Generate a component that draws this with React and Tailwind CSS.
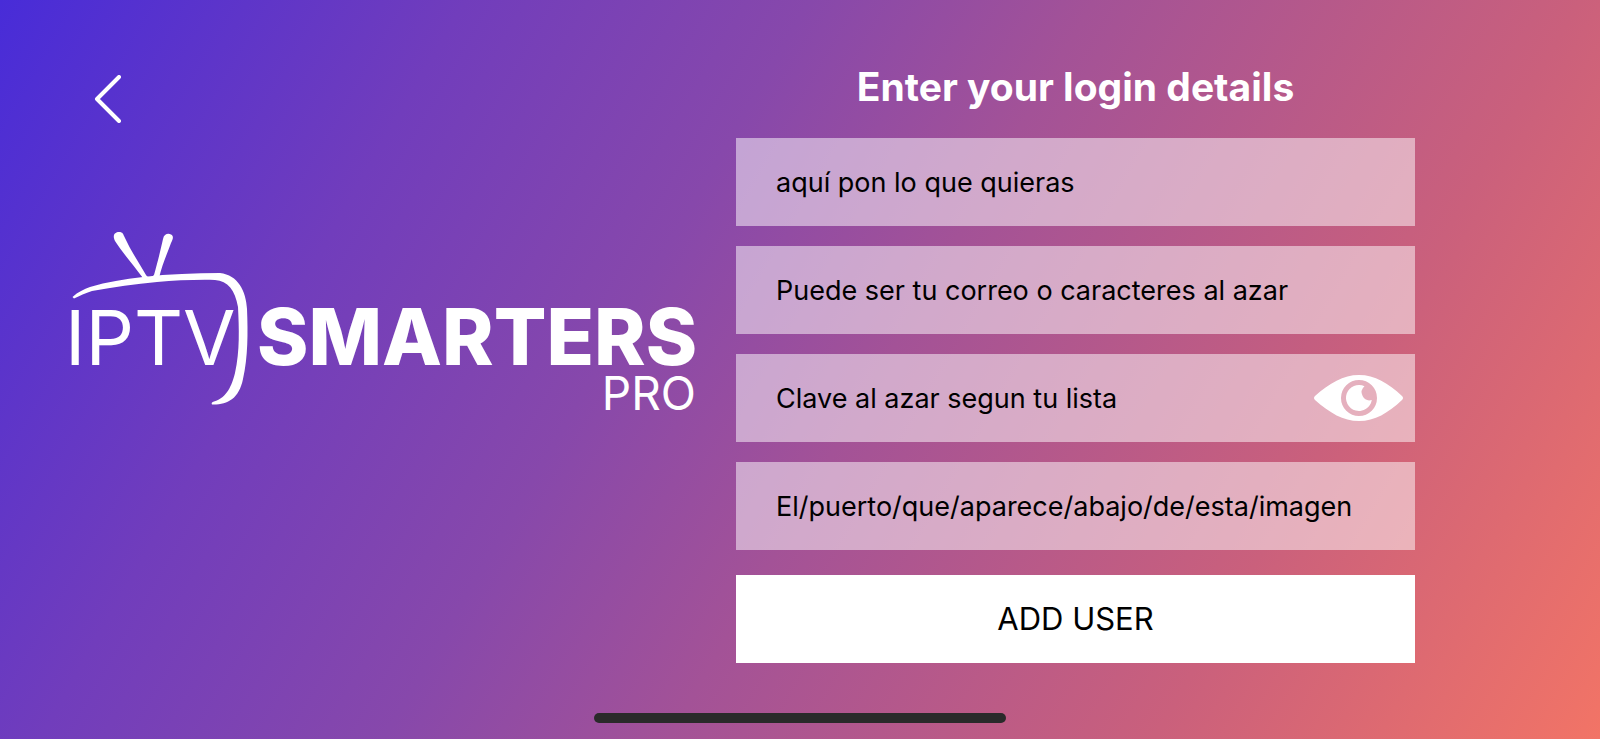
import React, { useState } from "react";

const fields = [
  { id: "name", label: "Any name", value: "aquí pon lo que quieras" },
  { id: "username", label: "Username", value: "Puede ser tu correo o caracteres al azar" },
  { id: "password", label: "Password", value: "Clave al azar segun tu lista" },
  { id: "url", label: "Server URL", value: "El/puerto/que/aparece/abajo/de/esta/imagen" },
];

const Logo = () => (
  <svg viewBox="0 0 630 184" className="w-full overflow-visible fill-white font-['Inter',sans-serif]" role="img" aria-label="IPTV Smarters Pro">
    {/* antennas */}
    <path d="M73 48 C64 36 52 22 45 11 C42 5 45 2 49 2 C53 2 53 4 55 8 C61 21 69 33 76 45 C78 48 81 48 84 45 C88 31 91 18 93 9 C94 4 98 3 101 4.500 C104 6 103 9 101 13 C97 24 92 35 89 48 Z" />
    {/* tv frame */}
    <path d="M2.500 67 C8 62 14 59 20 57 C37 52 54 49 73 47 C99 44 125 43 150 43 C168 45 176 61 177 79 C178 103 178 127 173 149 C169 169 157 175 142 174.500 C141 173 142 172 144 171.500 C157 168 162 155 165 143 C170 121 169 98 168 77 C165 60 158 51 145 50 C126 49.500 106 50.500 87 52 C65 54 44 57 22 61 C15 63 10 66 4 68.500 Z" />
    <text x="-5" y="135" fontSize="76" fontWeight="400">IPTV</text>
    <text x="187" y="135" fontSize="78" fontWeight="800">SMARTERS</text>
    <text x="626" y="180" fontSize="46" fontWeight="400" textAnchor="end">PRO</text>
  </svg>
);

const EyeIcon = () => (
  <svg viewBox="0 0 90 48" className="w-[90px] h-12">
    <path fill="white" fillRule="evenodd" d="M1 22 C16 9 29 1 45 1 C61 1 74 9 88 22 Q90 24 88 26 C74 39 61 47 45 47 C29 47 16 39 1 26 Q-1 24 1 22 Z M45 6 A18 18 0 1 0 45 42 A18 18 0 1 0 45 6 Z" />
    <path fill="white" d="M50.500 12.200 A13 13 0 1 0 57.800 26 A8 8 0 0 1 50.500 12.200 Z" />
  </svg>
);

const App = () => {
  const [values, setValues] = useState(fields.map((f) => f.value));
  const [showPassword, setShowPassword] = useState(true);

  const handleChange = (index, value) => {
    setValues(values.map((v, i) => (i === index ? value : v)));
  };

  return (
    <div className="min-h-screen flex flex-col font-['Inter',sans-serif] bg-[linear-gradient(120deg,#482cd8_0%,#713dbc_23%,#8748ab_40%,#a35297_54%,#ca607c_78%,#f27466_100%)]">
      <main className="flex-1 flex">
        <section className="w-[46%] pt-[75px] pl-[70px] pr-9">
          <button type="button" aria-label="Back" className="block ml-6">
            <svg viewBox="0 0 28 48" className="w-7 h-12" fill="none" stroke="white" strokeWidth="4" strokeLinecap="round" strokeLinejoin="round">
              <path d="M25 2 L3 24 L25 46" />
            </svg>
          </button>
          <div className="mt-[107px]">
            <Logo />
          </div>
        </section>

        <form className="flex-1 mr-[185px] pt-15 flex flex-col" onSubmit={(e) => e.preventDefault()}>
          <h1 className="text-center text-white text-[39px] leading-[54px] font-bold">Enter your login details</h1>
          <div className="mt-6 flex flex-col gap-5">
            {fields.map((field, index) => (
              <div key={field.id} className="flex items-center h-[88px] bg-white/50">
                <label htmlFor={field.id} className="sr-only">{field.label}</label>
                <input
                  id={field.id}
                  type={field.id === "password" && !showPassword ? "password" : "text"}
                  value={values[index]}
                  onChange={(e) => handleChange(index, e.target.value)}
                  className="flex-1 min-w-0 h-full px-10 bg-transparent text-[27px] leading-10 text-black outline-none"
                />
                {field.id === "password" && (
                  <button type="button" aria-label="Show password" className="mr-[11px]" onClick={() => setShowPassword(!showPassword)}>
                    <EyeIcon />
                  </button>
                )}
              </div>
            ))}
          </div>
          <button type="submit" className="mt-[25px] h-[88px] bg-white text-black text-[31px]">ADD USER</button>
        </form>
      </main>
      <footer className="flex justify-center pb-4 pt-6">
        <div className="w-[412px] h-[10px] rounded-full bg-[#2a2a2a]"></div>
      </footer>
    </div>
  );
};

export default App;
